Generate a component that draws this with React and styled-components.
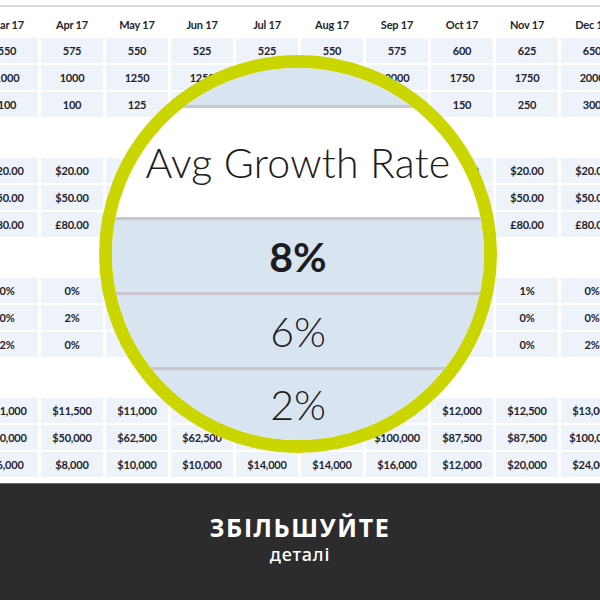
import React from "react";
import styled, { createGlobalStyle } from "styled-components";

const Global = createGlobalStyle`
  html, body { margin: 0; padding: 0; background: #fff; }
  body { font-family: "Lato", "Noto Sans", sans-serif; }
`;

const Page = styled.div`
  width: 600px;
  height: 600px;
  display: flex;
  flex-direction: column;
  overflow: hidden;
`;

const Sheet = styled.div`
  position: relative;
  height: 483px;
  flex: none;
  background: #fff;
  overflow: hidden;
  padding-top: 5px;
  box-sizing: border-box;
`;

const TopRule = styled.div`
  height: 2px;
  background: #dcdcde;
`;

const Grid = styled.div`
  margin-left: -24px;
  width: 647px;
  display: grid;
  grid-template-columns: repeat(10, 62px);
  column-gap: 3px;
`;

const HeadRow = styled(Grid)`
  height: 31px;
  align-items: center;
`;

const Head = styled.div`
  text-align: center;
  font: 700 11px "Lato", sans-serif;
  letter-spacing: -0.2px;
  color: #24242c;
  padding-top: 3px;
`;

const Group = styled(Grid)`
  row-gap: 2px;
  grid-auto-rows: 25px;
  margin-bottom: 41px;
`;

const Cell = styled.div`
  background: #eef3f9;
  display: flex;
  align-items: center;
  justify-content: center;
  font: 700 11px "Lato", sans-serif;
  letter-spacing: -0.2px;
  color: #24242c;
`;

const Lens = styled.div`
  position: absolute;
  left: 99px;
  top: 55px;
  width: 398px;
  height: 398px;
  box-sizing: border-box;
  border: 13px solid #cbd600;
  border-radius: 50%;
  overflow: hidden;
  background: #fff;
  display: flex;
  flex-direction: column;
`;

const LensBand = styled.div`
  height: 37px;
  flex: none;
  background: #d8e4ef;
  border-bottom: 3px solid #c6c9d0;
`;

const LensHead = styled.div`
  height: 109px;
  flex: none;
  background: #fff;
  display: flex;
  align-items: center;
  justify-content: center;
  font: 300 41px "Lato", sans-serif;
  color: #1c1c22;
  letter-spacing: 0.2px;
`;

const LensRow = styled.div`
  height: 72px;
  flex: none;
  background: #d8e4ef;
  border-top: 3px solid #cbc3cd;
  display: flex;
  align-items: center;
  justify-content: center;
  font-family: "Lato", sans-serif;
  font-size: 41px;
  font-weight: ${(p) => (p.$bold ? 700 : 300)};
  color: #1c1c22;
`;

const LensRest = styled(LensRow)`
  flex: 1;
  align-items: flex-start;
  padding-top: 10px;
`;

const Footer = styled.div`
  flex: 1;
  background: #2c2c2f;
  border-top: 1px solid #6a6a6d;
  display: flex;
  flex-direction: column;
  align-items: center;
  justify-content: center;
  color: #fff;
  font-family: "Noto Sans", sans-serif;
  padding-bottom: 6px;
`;

const Title = styled.div`
  font-size: 25px;
  font-weight: 700;
  letter-spacing: 1.6px;
  line-height: 30px;
`;

const Sub = styled.div`
  font-size: 18px;
  font-weight: 500;
  letter-spacing: 0.8px;
  line-height: 24px;
`;

const months = ["Mar 17", "Apr 17", "May 17", "Jun 17", "Jul 17", "Aug 17", "Sep 17", "Oct 17", "Nov 17", "Dec 17"];

const groups = [
  [
    ["550", "575", "550", "525", "525", "550", "575", "600", "625", "650"],
    ["1000", "1000", "1250", "1250", "1500", "1750", "2000", "1750", "1750", "2000"],
    ["100", "100", "125", "125", "150", "150", "175", "150", "250", "300"],
  ],
  [
    ["$20.00", "$20.00", "$20.00", "$20.00", "$20.00", "$20.00", "$20.00", "$20.00", "$20.00", "$20.00"],
    ["$50.00", "$50.00", "$50.00", "$50.00", "$50.00", "$50.00", "$50.00", "$50.00", "$50.00", "$50.00"],
    ["£80.00", "£80.00", "£80.00", "£80.00", "£80.00", "£80.00", "£80.00", "£80.00", "£80.00", "£80.00"],
  ],
  [
    ["0%", "0%", "1%", "0%", "0%", "1%", "0%", "0%", "1%", "0%"],
    ["0%", "2%", "0%", "1%", "0%", "0%", "2%", "0%", "0%", "0%"],
    ["2%", "0%", "0%", "1%", "2%", "0%", "0%", "1%", "0%", "2%"],
  ],
  [
    ["$11,000", "$11,500", "$11,000", "$11,500", "$12,000", "$12,500", "$12,000", "$12,000", "$12,500", "$13,000"],
    ["$50,000", "$50,000", "$62,500", "$62,500", "$75,000", "$87,500", "$100,000", "$87,500", "$87,500", "$100,000"],
    ["$6,000", "$8,000", "$10,000", "$10,000", "$14,000", "$14,000", "$16,000", "$12,000", "$20,000", "$24,000"],
  ],
];

export default function App() {
  return (
    <>
      <Global />
      <Page>
        <Sheet>
          <TopRule />
          <HeadRow>
            {months.map((m) => (
              <Head key={m}>{m}</Head>
            ))}
          </HeadRow>
          {groups.map((g, gi) => (
            <Group key={gi}>
              {g.flatMap((row, ri) => row.map((v, ci) => <Cell key={`${ri}-${ci}`}>{v}</Cell>))}
            </Group>
          ))}
          <Lens>
            <LensBand />
            <LensHead>Avg Growth Rate</LensHead>
            <LensRow $bold>8%</LensRow>
            <LensRow>6%</LensRow>
            <LensRest>2%</LensRest>
          </Lens>
        </Sheet>
        <Footer>
          <Title>ЗБІЛЬШУЙТЕ</Title>
          <Sub>деталі</Sub>
        </Footer>
      </Page>
    </>
  );
}
